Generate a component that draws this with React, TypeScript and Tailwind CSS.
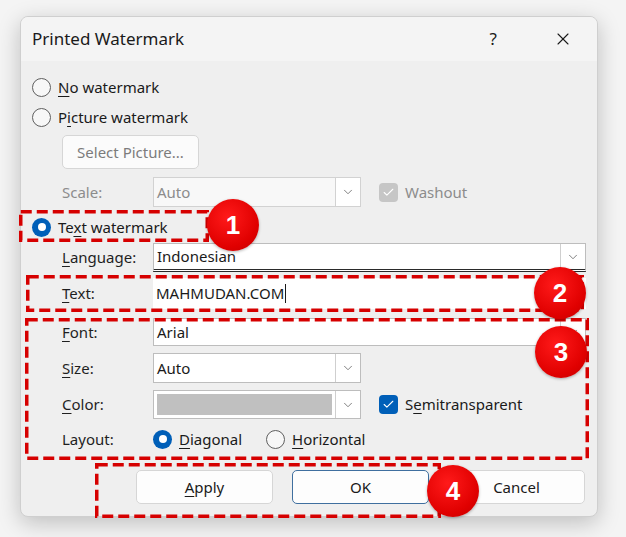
import { Check, ChevronDown, X } from "lucide-react"
import type React from "react"

const ui = "font-['Noto_Sans',sans-serif]"

function Radio({ checked }: { checked?: boolean }) {
  if (checked) {
    return (
      <div className="w-[19px] h-[19px] rounded-full bg-[#005fb8] flex items-center justify-center shrink-0">
        <div className="w-[8px] h-[8px] rounded-full bg-white" />
      </div>
    )
  }
  return <div className="w-[19px] h-[19px] rounded-full border border-[#5f5f5f] bg-[#f7f7f7] shrink-0" />
}

function CheckBox({ on, disabled }: { on?: boolean; disabled?: boolean }) {
  return (
    <div
      className={`w-[19px] h-[19px] rounded-[4px] flex items-center justify-center shrink-0 ${
        disabled ? "bg-[#c6c6c6]" : on ? "bg-[#005fb8]" : "border border-[#5f5f5f]"
      }`}
    >
      {on && <Check size={13} strokeWidth={2} color="#ffffff" />}
    </div>
  )
}

function Combo({
  width,
  height,
  disabled,
  className = "",
  children,
}: {
  width: string
  height: string
  disabled?: boolean
  className?: string
  children?: React.ReactNode
}) {
  return (
    <div
      className={`flex border ${disabled ? "border-[#d2d2d2] bg-[#f8f8f8]" : "border-[#bdbdbd] bg-white"} ${width} ${height} ${className}`}
    >
      <div className={`flex-1 flex items-center px-[3px] ${disabled ? "text-[#8c8c8c]" : "text-[#1a1a1a]"}`}>
        {children}
      </div>
      <div className={`w-[25px] flex items-center justify-center border-l ${disabled ? "border-[#d2d2d2]" : "border-[#cfcfcf]"} bg-white`}>
        <ChevronDown size={14} strokeWidth={1.4} color="#666666" />
      </div>
    </div>
  )
}

function U({ children }: { children: React.ReactNode }) {
  return <span className="underline underline-offset-[3px] decoration-1">{children}</span>
}

function Row({ label, gray, h, mt, children }: { label: React.ReactNode; gray?: boolean; h: string; mt: string; children: React.ReactNode }) {
  return (
    <div className={`flex items-center pl-[41px] ${h} ${mt}`}>
      <div className={`w-[91px] ${gray ? "text-[#8c8c8c]" : "text-[#1f1f1f]"}`}>{label}</div>
      {children}
    </div>
  )
}

function Badge({ n, className }: { n: string; className: string }) {
  return (
    <div
      className={`absolute w-[52px] h-[52px] rounded-full bg-[radial-gradient(circle_at_40%_35%,#ff1a1a,#e00000_65%,#c00000)] flex items-center justify-center text-white text-[26px] font-bold font-['Liberation_Sans',sans-serif] shadow-[0_1px_3px_rgba(0,0,0,0.3)] ${className}`}
    >
      {n}
    </div>
  )
}

// red dashed annotation frame
function DashBox({ w, h, className }: { w: number; h: number; className: string }) {
  return (
    <svg className={`absolute ${className}`} width={w} height={h} viewBox={`0 0 ${w} ${h}`}>
      <rect x={1.75} y={1.75} width={w - 3.5} height={h - 3.5} fill="none" stroke="#d60000" strokeWidth={3.5} strokeDasharray="11 5" />
    </svg>
  )
}

function Button({ children, focus }: { children: React.ReactNode; focus?: boolean }) {
  return (
    <div
      className={`w-[137px] h-[34px] rounded-[5px] bg-[#fdfdfd] flex items-center justify-center text-[#1a1a1a] border ${
        focus ? "border-[#3f6f9f]" : "border-[#d6d6d6]"
      }`}
    >
      {children}
    </div>
  )
}

export default function App() {
  return (
    <div className={`relative w-[626px] h-[537px] overflow-hidden bg-[#f4f4f4] pt-[16px] pl-[20px] text-[15px] ${ui}`}>
      <div className="w-[578px] h-[501px] rounded-[8px] border border-[#cfcfcf] bg-[#efefef] shadow-[0_6px_22px_rgba(0,0,0,0.22)] overflow-hidden flex flex-col">
        {/* title bar */}
        <div className="h-[44px] bg-[#f4f4f4] flex items-center pl-[11px] pr-[24px] shrink-0">
          <div className="flex-1 text-[17px] text-[#1a1a1a]">Printed Watermark</div>
          <div className="text-[17px] text-[#1a1a1a] mr-[56px]">?</div>
          <X size={20} strokeWidth={1.3} color="#1a1a1a" />
        </div>

        <div className="flex flex-col pt-[14px] text-[#1a1a1a]">
          <div className="flex items-center h-[24px] pl-[11px] gap-[7px]">
            <Radio />
            <span>
              <U>N</U>o watermark
            </span>
          </div>
          <div className="flex items-center h-[24px] mt-[6px] pl-[11px] gap-[7px]">
            <Radio />
            <span>
              P<U>i</U>cture watermark
            </span>
          </div>
          <div className="mt-[6px] pl-[41px] h-[34px]">
            <div className="w-[137px] h-[34px] rounded-[5px] border border-[#d6d6d6] bg-[#fbfbfb] flex items-center justify-center text-[#7c7c7c]">
              Select Picture...
            </div>
          </div>
          <Row label="Scale:" gray h="h-[30px]" mt="mt-[8px]">
            <Combo width="w-[208px]" height="h-[30px]" disabled>
              Auto
            </Combo>
            <div className="flex items-center gap-[7px] ml-[18px] text-[#8c8c8c]">
              <CheckBox on disabled />
              Washout
            </div>
          </Row>
          <div className="flex items-center h-[24px] mt-[8px] pl-[11px] gap-[7px]">
            <Radio checked />
            <span>
              Te<U>x</U>t watermark
            </span>
          </div>
          <Row
            label={
              <>
                <U>L</U>anguage:
              </>
            }
            h="h-[29px]"
            mt="mt-[4px]"
          >
            <Combo width="w-[433px]" height="h-[29px]" className="border-b-[3px] border-b-[#2a2a2a] border-double">
              Indonesian
            </Combo>
          </Row>
          <Row
            label={
              <>
                <U>T</U>ext:
              </>
            }
            h="h-[31px]"
            mt="mt-[6px]"
          >
            <div className="w-[433px] h-[31px] bg-white flex items-center px-[3px]">
              MAHMUDAN.COM
              <span className="w-px h-[19px] bg-[#1a1a1a] ml-[1px]" />
            </div>
          </Row>
          <Row
            label={
              <>
                <U>F</U>ont:
              </>
            }
            h="h-[28px]"
            mt="mt-[9px]"
          >
            <Combo width="w-[433px]" height="h-[28px]">
              Arial
            </Combo>
          </Row>
          <Row
            label={
              <>
                <U>S</U>ize:
              </>
            }
            h="h-[30px]"
            mt="mt-[7px]"
          >
            <Combo width="w-[208px]" height="h-[30px]">
              Auto
            </Combo>
          </Row>
          <Row
            label={
              <>
                <U>C</U>olor:
              </>
            }
            h="h-[29px]"
            mt="mt-[7px]"
          >
            <Combo width="w-[208px]" height="h-[29px]">
              <div className="w-full h-[21px] bg-[#c0c0c0]" />
            </Combo>
            <div className="flex items-center gap-[7px] ml-[18px]">
              <CheckBox on />
              <span>
                S<U>e</U>mitransparent
              </span>
            </div>
          </Row>
          <Row label="Layout:" h="h-[24px]" mt="mt-[8px]">
            <div className="flex items-center gap-[7px]">
              <Radio checked />
              <span>
                <U>D</U>iagonal
              </span>
            </div>
            <div className="flex items-center gap-[7px] ml-[24px]">
              <Radio />
              <span>
                <U>H</U>orizontal
              </span>
            </div>
          </Row>
          <div className="flex justify-end gap-[19px] pr-[12px] mt-[19px]">
            <Button>
              <U>A</U>pply
            </Button>
            <Button focus>OK</Button>
            <Button>Cancel</Button>
          </div>
        </div>
      </div>

      {/* annotations */}
      <DashBox w={190} h={32} className="left-[19px] top-[210px]" />
      <DashBox w={558} h={37} className="left-[26px] top-[275px]" />
      <DashBox w={564} h={142} className="left-[25px] top-[318px]" />
      <DashBox w={346} h={55} className="left-[95px] top-[463px]" />
      <Badge n="1" className="left-[207px] top-[199px]" />
      <Badge n="2" className="left-[534px] top-[267px]" />
      <Badge n="3" className="left-[535px] top-[326px]" />
      <Badge n="4" className="left-[427px] top-[465px]" />
    </div>
  )
}
